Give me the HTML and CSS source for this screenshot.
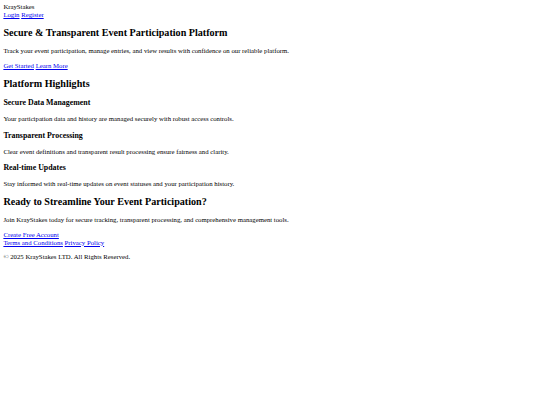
FILE: index.html
```html
<!DOCTYPE html>
<html lang="en">
<head>
<meta charset="utf-8">
<title>KrayStakes</title>
<link rel="stylesheet" href="styles.css">
</head>
<body class="page">
<header class="site-header">
  <div class="brand">KrayStakes</div>
  <nav class="nav"><a href="#">Login</a> <a href="#">Register</a></nav>
</header>
<main>
  <section class="hero">
    <h2 class="title">Secure &amp; Transparent Event Participation Platform</h2>
    <p class="text">Track your event participation, manage entries, and view results with confidence on our reliable platform.</p>
    <div class="actions"><a href="#">Get Started</a> <a href="#">Learn More</a></div>
  </section>
  <section class="features">
    <h2 class="title">Platform Highlights</h2>
    <h3 class="subtitle">Secure Data Management</h3>
    <p class="text">Your participation data and history are managed securely with robust access controls.</p>
    <h3 class="subtitle">Transparent Processing</h3>
    <p class="text">Clear event definitions and transparent result processing ensure fairness and clarity.</p>
    <h3 class="subtitle">Real-time Updates</h3>
    <p class="text">Stay informed with real-time updates on event statuses and your participation history.</p>
  </section>
  <section class="cta">
    <h2 class="title">Ready to Streamline Your Event Participation?</h2>
    <p class="text">Join KrayStakes today for secure tracking, transparent processing, and comprehensive management tools.</p>
    <div class="actions"><a href="#">Create Free Account</a></div>
  </section>
</main>
<footer class="site-footer">
  <div class="links"><a href="#">Terms and Conditions</a> <a href="#">Privacy Policy</a></div>
  <p class="text">© 2025 KrayStakes LTD. All Rights Reserved.</p>
</footer>
</body>
</html>
```
FILE: styles.css
```css
.page {
  margin: 3.375px;
  font-family: "Liberation Serif", "Times New Roman", serif;
  font-size: 6.75px;
  line-height: 1.15;
  color: #000;
  background: #fff;
}
.page a { color: #0000ee; }
.title {
  font-family: "Liberation Serif", "Times New Roman", serif;
  font-size: 1.5em;
  line-height: 1.15;
  margin: 0.83em 0;
  font-weight: bold;
}
.subtitle {
  font-family: "Liberation Serif", "Times New Roman", serif;
  font-size: 1.17em;
  line-height: 1.15;
  margin: 1em 0;
  font-weight: bold;
}
.text { margin: 1em 0; }
```
